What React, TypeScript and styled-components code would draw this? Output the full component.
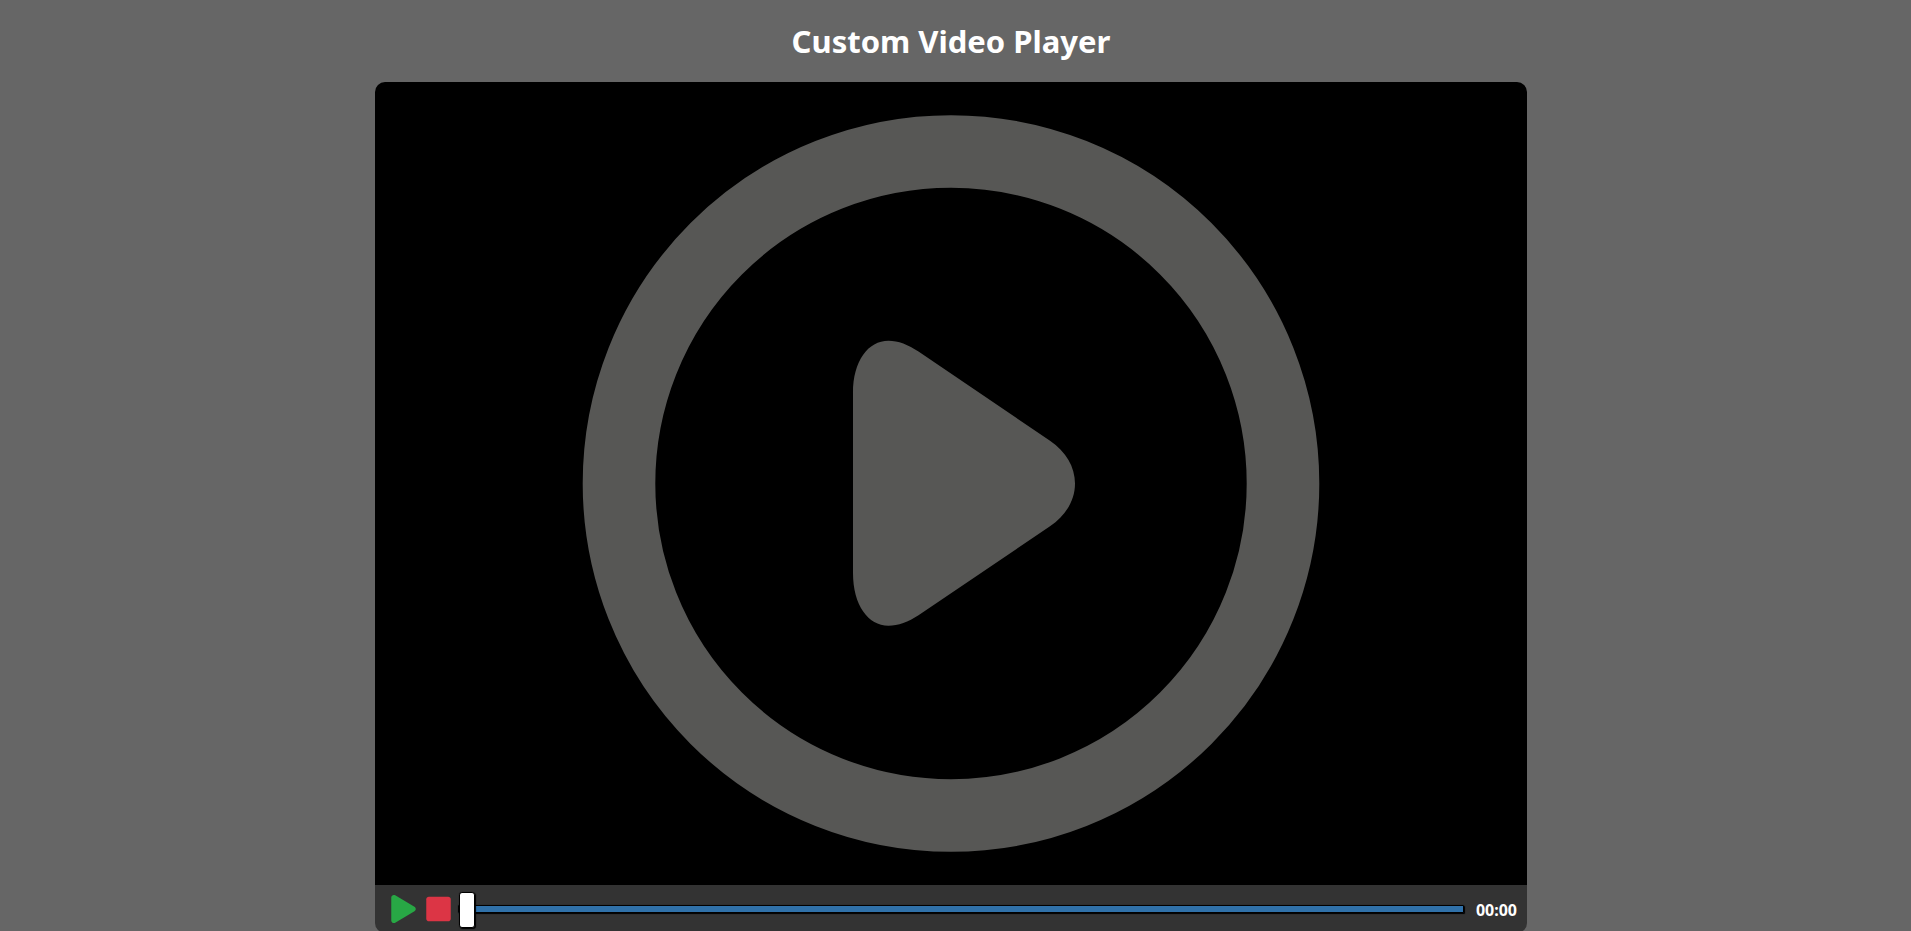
import React, { useState } from 'react';
import styled, { createGlobalStyle } from 'styled-components';
import { FaPlay, FaStop } from 'react-icons/fa';

const GlobalStyle = createGlobalStyle`
  * {
    box-sizing: border-box;
  }
  html {
    scrollbar-width: none;
  }
  body {
    margin: 0;
    background: #666;
    color: #fff;
    font-family: 'Noto Sans', 'Open Sans', sans-serif;
    font-weight: 700;
  }
`;

const Page = styled.main`
  display: flex;
  flex-direction: column;
  align-items: center;
  padding-right: 9px;
`;

const Title = styled.h1`
  margin: 19px 0;
  font-size: 31px;
  line-height: 44px;
`;

const Player = styled.section`
  width: 100%;
  max-width: 1152px;
  border-radius: 10px;
  overflow: hidden;
`;

const Screen = styled.button`
  display: block;
  width: 100%;
  padding: 0;
  border: 0;
  background: #000;
  cursor: pointer;

  svg {
    display: block;
    width: 100%;
    height: auto;
  }
`;

const Controls = styled.div`
  display: flex;
  align-items: center;
  height: 48px;
  padding: 0 10px 0 16px;
  background: #333;
`;

const IconButton = styled.button<{ $color: string }>`
  display: flex;
  margin-right: 10px;
  padding: 0;
  border: 0;
  background: transparent;
  color: ${({ $color }) => $color};
  cursor: pointer;

  svg {
    width: 25px;
    height: 28px;
  }
`;

const Progress = styled.input`
  flex: 1;
  min-width: 0;
  height: 36px;
  margin: 0 12px 0 -3px;
  appearance: none;
  background: transparent;
  cursor: pointer;

  &::-webkit-slider-runnable-track {
    height: 8px;
    border: 1px solid #010101;
    border-radius: 1px;
    background: #3071a9;
    box-shadow: 1px 1px 1px #000, 0 0 1px #0d0d0d;
  }

  &::-webkit-slider-thumb {
    appearance: none;
    width: 16px;
    height: 36px;
    margin-top: -14px;
    border: 1px solid #000;
    border-radius: 3px;
    background: #fff;
    box-shadow: 1px 1px 1px #000, 0 0 1px #0d0d0d;
  }
`;

const Timestamp = styled.span`
  padding-top: 2px;
  font-size: 16px;
  line-height: 24px;
`;

function Poster() {
  return (
    <svg viewBox="0 0 1152 803" aria-hidden="true">
      <circle cx="576" cy="401.5" r="332" fill="none" stroke="#575755" strokeWidth="72.6" />
      <path
        d="M478 311C478 279 493 258.7 513.5 258.7C523 258.7 533.5 262.7 543.5 269.5L675 358.7C691 369.5 700 385 700 401.5C700 418 691 433.5 675 444.3L543.5 533.3C533.5 540 523 543.7 513.5 543.7C493 543.7 478 523 478 491Z"
        fill="#575755"
      />
    </svg>
  );
}

export default function App() {
  const [position, setPosition] = useState(0);
  return (
    <>
      <GlobalStyle />
      <Page>
        <Title>Custom Video Player</Title>
        <Player>
          <Screen type="button" aria-label="Play video">
            <Poster />
          </Screen>
          <Controls>
            <IconButton type="button" $color="#28a745" aria-label="Play">
              <FaPlay />
            </IconButton>
            <IconButton type="button" $color="#dc3545" aria-label="Stop" onClick={() => setPosition(0)}>
              <FaStop />
            </IconButton>
            <Progress
              type="range"
              min={0}
              max={100}
              step={1}
              value={position}
              aria-label="Progress"
              onChange={(e) => setPosition(Number(e.target.value))}
            />
            <Timestamp>00:00</Timestamp>
          </Controls>
        </Player>
      </Page>
    </>
  );
}
